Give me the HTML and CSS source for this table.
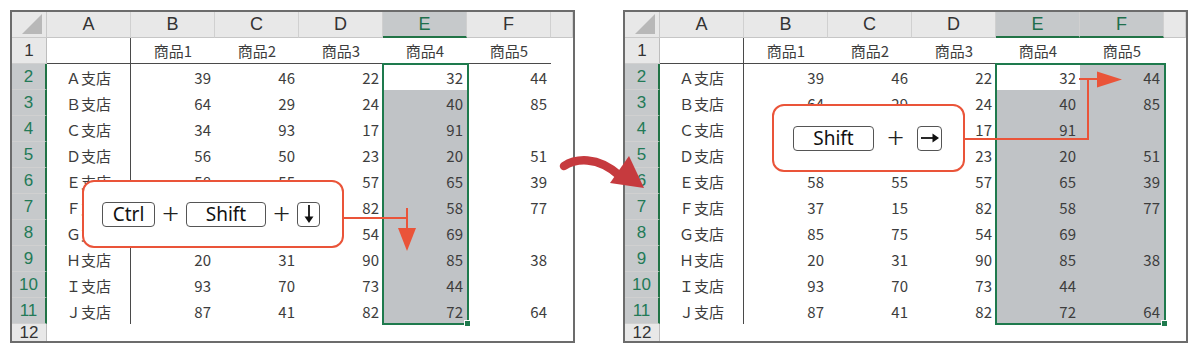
FILE: index.html
```html
<!DOCTYPE html>
<html lang="ja">
<head>
<meta charset="utf-8">
<link rel="stylesheet" href="styles.css">
</head>
<body>
<div class="page">
  <div class="sheet">
    <div class="grid">
      <div class="corner"><span class="tri"></span></div>
      <div class="ch">A</div><div class="ch">B</div><div class="ch">C</div><div class="ch">D</div><div class="ch sel">E</div><div class="ch">F</div><div class="ch"></div>

      <div class="rh">1</div><div class="c br bb"></div><div class="c h bb">商品1</div><div class="c h bb">商品2</div><div class="c h bb">商品3</div><div class="c h bb">商品4</div><div class="c h bb">商品5</div><div class="c"></div>

      <div class="rh sel">2</div><div class="c a br">Ａ支店</div><div class="c n">39</div><div class="c n">46</div><div class="c n">22</div><div class="c n">32</div><div class="c n">44</div><div class="c"></div>
      <div class="rh sel">3</div><div class="c a br">Ｂ支店</div><div class="c n">64</div><div class="c n">29</div><div class="c n">24</div><div class="c n g">40</div><div class="c n">85</div><div class="c"></div>
      <div class="rh sel">4</div><div class="c a br">Ｃ支店</div><div class="c n">34</div><div class="c n">93</div><div class="c n">17</div><div class="c n g">91</div><div class="c n"></div><div class="c"></div>
      <div class="rh sel">5</div><div class="c a br">Ｄ支店</div><div class="c n">56</div><div class="c n">50</div><div class="c n">23</div><div class="c n g">20</div><div class="c n">51</div><div class="c"></div>
      <div class="rh sel">6</div><div class="c a br">Ｅ支店</div><div class="c n">58</div><div class="c n">55</div><div class="c n">57</div><div class="c n g">65</div><div class="c n">39</div><div class="c"></div>
      <div class="rh sel">7</div><div class="c a br">Ｆ支店</div><div class="c n">37</div><div class="c n">15</div><div class="c n">82</div><div class="c n g">58</div><div class="c n">77</div><div class="c"></div>
      <div class="rh sel">8</div><div class="c a br">Ｇ支店</div><div class="c n">85</div><div class="c n">75</div><div class="c n">54</div><div class="c n g">69</div><div class="c n"></div><div class="c"></div>
      <div class="rh sel">9</div><div class="c a br">Ｈ支店</div><div class="c n">20</div><div class="c n">31</div><div class="c n">90</div><div class="c n g">85</div><div class="c n">38</div><div class="c"></div>
      <div class="rh sel">10</div><div class="c a br">Ｉ支店</div><div class="c n">93</div><div class="c n">70</div><div class="c n">73</div><div class="c n g">44</div><div class="c n"></div><div class="c"></div>
      <div class="rh sel">11</div><div class="c a br">Ｊ支店</div><div class="c n">87</div><div class="c n">41</div><div class="c n">82</div><div class="c n g">72</div><div class="c n">64</div><div class="c"></div>

      <div class="rh last">12</div><div class="c"></div><div class="c"></div><div class="c"></div><div class="c"></div><div class="c"></div><div class="c"></div><div class="c"></div>
    </div>
    <div class="selbox one"><span class="handle"></span></div>
  </div>

  <div class="sheet">
    <div class="grid">
      <div class="corner"><span class="tri"></span></div>
      <div class="ch">A</div><div class="ch">B</div><div class="ch">C</div><div class="ch">D</div><div class="ch sel">E</div><div class="ch sel">F</div><div class="ch"></div>

      <div class="rh">1</div><div class="c br bb"></div><div class="c h bb">商品1</div><div class="c h bb">商品2</div><div class="c h bb">商品3</div><div class="c h bb">商品4</div><div class="c h bb">商品5</div><div class="c"></div>

      <div class="rh sel">2</div><div class="c a br">Ａ支店</div><div class="c n">39</div><div class="c n">46</div><div class="c n">22</div><div class="c n">32</div><div class="c n g">44</div><div class="c"></div>
      <div class="rh sel">3</div><div class="c a br">Ｂ支店</div><div class="c n">64</div><div class="c n">29</div><div class="c n">24</div><div class="c n g">40</div><div class="c n g">85</div><div class="c"></div>
      <div class="rh sel">4</div><div class="c a br">Ｃ支店</div><div class="c n">34</div><div class="c n">93</div><div class="c n">17</div><div class="c n g">91</div><div class="c n g"></div><div class="c"></div>
      <div class="rh sel">5</div><div class="c a br">Ｄ支店</div><div class="c n">56</div><div class="c n">50</div><div class="c n">23</div><div class="c n g">20</div><div class="c n g">51</div><div class="c"></div>
      <div class="rh sel">6</div><div class="c a br">Ｅ支店</div><div class="c n">58</div><div class="c n">55</div><div class="c n">57</div><div class="c n g">65</div><div class="c n g">39</div><div class="c"></div>
      <div class="rh sel">7</div><div class="c a br">Ｆ支店</div><div class="c n">37</div><div class="c n">15</div><div class="c n">82</div><div class="c n g">58</div><div class="c n g">77</div><div class="c"></div>
      <div class="rh sel">8</div><div class="c a br">Ｇ支店</div><div class="c n">85</div><div class="c n">75</div><div class="c n">54</div><div class="c n g">69</div><div class="c n g"></div><div class="c"></div>
      <div class="rh sel">9</div><div class="c a br">Ｈ支店</div><div class="c n">20</div><div class="c n">31</div><div class="c n">90</div><div class="c n g">85</div><div class="c n g">38</div><div class="c"></div>
      <div class="rh sel">10</div><div class="c a br">Ｉ支店</div><div class="c n">93</div><div class="c n">70</div><div class="c n">73</div><div class="c n g">44</div><div class="c n g"></div><div class="c"></div>
      <div class="rh sel">11</div><div class="c a br">Ｊ支店</div><div class="c n">87</div><div class="c n">41</div><div class="c n">82</div><div class="c n g">72</div><div class="c n g">64</div><div class="c"></div>

      <div class="rh last">12</div><div class="c"></div><div class="c"></div><div class="c"></div><div class="c"></div><div class="c"></div><div class="c"></div><div class="c"></div>
    </div>
    <div class="selbox two"><span class="handle"></span></div>
  </div>

  <div class="callout left">
    <span class="key ctrl">Ctrl</span>
    <span class="plus">+</span>
    <span class="key shift">Shift</span>
    <span class="plus">+</span>
    <span class="key arrow">
      <svg width="14" height="20" viewBox="0 0 14 20"><line x1="7" y1="1" x2="7" y2="14" stroke="#111" stroke-width="1.8"/><polygon points="2.5,12.5 11.5,12.5 7,19" fill="#111"/></svg>
    </span>
  </div>

  <div class="callout right">
    <span class="key shift2">Shift</span>
    <span class="plus wide">+</span>
    <span class="key arrow2">
      <svg width="20" height="14" viewBox="0 0 20 14"><line x1="1" y1="7" x2="14" y2="7" stroke="#111" stroke-width="1.8"/><polygon points="12.5,2.5 12.5,11.5 19,7" fill="#111"/></svg>
    </span>
  </div>

  <svg class="overlay" width="1200" height="355" viewBox="0 0 1200 355">
    <g stroke="#ea5439" stroke-width="2" fill="none">
      <path d="M343 218 H408"/>
      <path d="M407 208 V231"/>
      <path d="M964 139 H1088 V79"/>
      <path d="M1079 79 H1100"/>
    </g>
    <g fill="#ea5439">
      <polygon points="398,228 416,228 407,251"/>
      <polygon points="1097,71.5 1097,87.5 1122,79.5"/>
    </g>
    <path d="M564 166 C 575 159, 597 155, 620 176" stroke="#c63a3e" stroke-width="8.5" stroke-linecap="round" fill="none"/>
    <polygon points="629,156 610,183 644,188" fill="#c63a3e"/>
  </svg>
</div>
</body>
</html>
```

FILE: styles.css
```css
html, body {
  margin: 0;
  padding: 0;
  background: #ffffff;
}

.page {
  position: relative;
  width: 1200px;
  height: 355px;
  box-sizing: border-box;
  padding: 10px 0 0 10px;
  display: flex;
  gap: 48px;
  align-items: flex-start;
  font-family: "Noto Sans CJK JP", "Noto Sans", sans-serif;
  color: #3a3a3a;
  overflow: hidden;
}

.sheet {
  position: relative;
  width: 561px;
  height: 329px;
  border: 2px solid #6c6c6c;
  background: #ffffff;
}

.grid {
  display: grid;
  grid-template-columns: 35px repeat(6, 84px) 1fr;
  grid-template-rows: repeat(12, 26px) 17px;
  height: 100%;
  overflow: hidden;
}

.grid > div {
  box-sizing: border-box;
  display: flex;
  align-items: center;
  min-width: 0;
  overflow: hidden;
  white-space: nowrap;
}

.corner {
  background: #e8e8e8;
  border-right: 1px solid #c9c9c9;
  border-bottom: 1px solid #c9c9c9;
  position: relative;
}

.tri {
  position: absolute;
  right: 4px;
  bottom: 3px;
  width: 20px;
  height: 20px;
  background: #b8b8b8;
  clip-path: polygon(100% 0, 100% 100%, 0 100%);
}

.ch {
  justify-content: center;
  background: #e8e8e8;
  border-right: 1px solid #d0d0d0;
  border-bottom: 1px solid #c6c6c6;
  font-family: "Liberation Sans", "Noto Sans", sans-serif;
  font-size: 18px;
  color: #333;
}

.ch.sel {
  background: #c6c9cb;
  color: #1f6f4c;
  border-bottom: 2px solid #217346;
}

.rh {
  justify-content: center;
  background: #e8e8e8;
  border-right: 1px solid #bdbdbd;
  border-bottom: 1px solid #d0d0d0;
  font-family: "Liberation Sans", "Noto Sans", sans-serif;
  font-size: 17px;
  color: #333;
}

.rh.sel {
  background: #c6c9cb;
  color: #237a57;
  border-right: 2px solid #217346;
}

.rh.last {
  align-items: flex-start;
  padding-top: 0;
  line-height: 18px;
  border-bottom: none;
}

.c {
  font-size: 15px;
  color: #3d3d3d;
}

.c.a {
  justify-content: center;
}

.c.h {
  justify-content: center;
}

.c.n {
  justify-content: flex-end;
  padding-right: 4px;
}

.c.br {
  border-right: 1.5px solid #4a4a4a;
}

.c.bb {
  border-bottom: 1.5px solid #4a4a4a;
}

.c.g {
  background: #c0c3c6;
}

.selbox {
  position: absolute;
  top: 51px;
  height: 262px;
  box-sizing: border-box;
  border: 2px solid #1e7a4d;
  pointer-events: none;
}

.selbox.one {
  left: 370px;
  width: 87px;
}

.selbox.two {
  left: 370px;
  width: 171px;
}

.handle {
  position: absolute;
  right: -4px;
  bottom: -4px;
  width: 5px;
  height: 5px;
  background: #1e7a4d;
  border: 1px solid #ffffff;
}

.callout {
  position: absolute;
  box-sizing: border-box;
  height: 68px;
  border: 2px solid #ea5439;
  border-radius: 12px;
  background: #ffffff;
  display: flex;
  align-items: center;
}

.callout.left {
  left: 82px;
  top: 180px;
  width: 262px;
  padding-left: 18px;
  gap: 8px;
}

.callout.right {
  left: 772px;
  top: 104px;
  width: 193px;
  padding-left: 19px;
  gap: 14px;
}

.key {
  box-sizing: border-box;
  height: 25px;
  border: 1.5px solid #555;
  border-radius: 4px;
  display: flex;
  align-items: center;
  justify-content: center;
  font-family: "Noto Sans", "Open Sans", sans-serif;
  font-size: 19px;
  font-weight: 400;
  color: #111;
  background: #ffffff;
}

.key.ctrl {
  width: 53px;
}

.key.shift {
  width: 80px;
}

.key.shift2 {
  width: 81px;
}

.key.arrow {
  width: 23px;
}

.key.arrow2 {
  width: 25px;
}

.plus {
  width: 15px;
  display: flex;
  justify-content: center;
  font-family: "Noto Sans", sans-serif;
  font-size: 30px;
  font-weight: 300;
  line-height: 1;
  color: #222;
  padding-bottom: 3px;
}

.overlay {
  position: absolute;
  left: 0;
  top: 0;
  pointer-events: none;
}
```
